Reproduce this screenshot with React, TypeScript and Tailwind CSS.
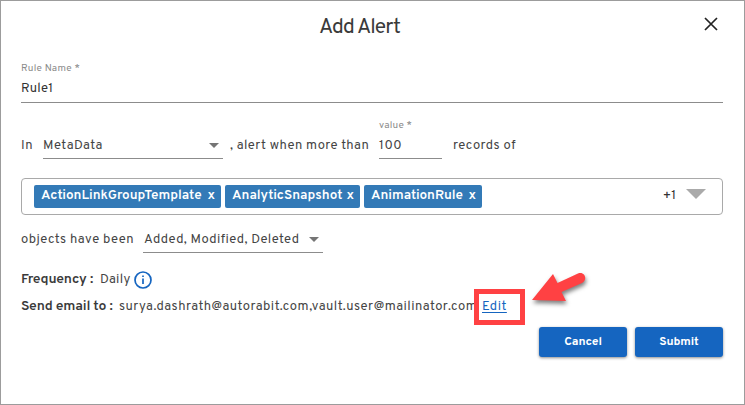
import React from "react";

type Chip = { label: string; width: string };

const chips: Chip[] = [
  { label: "ActionLinkGroupTemplate", width: "w-[187px]" },
  { label: "AnalyticSnapshot", width: "w-[135px]" },
  { label: "AnimationRule", width: "w-[118px]" },
];

function Caret({ className }: { className: string }) {
  return (
    <svg viewBox="0 0 10 5" preserveAspectRatio="none" className={className}>
      <path d="M0 0H10L5 5Z" fill="currentColor" />
    </svg>
  );
}

export default function App() {
  return (
    <div className="relative flex h-[405px] w-[745px] flex-col overflow-hidden whitespace-nowrap border border-[#9c9c9c] bg-white pl-5 pr-[21px] font-[Overpass,Roboto,sans-serif] text-[13px] leading-4 text-[#444]">
      <header className="flex h-[60px] shrink-0 pt-[15px]">
        <h1 className="ml-[298px] w-[371px] text-[21px] leading-6 tracking-[-0.95px] text-[#3a3a3a]">Add Alert</h1>
        <button aria-label="Close" className="ml-[14px] mt-px size-[14px]">
          <svg viewBox="0 0 14 14" className="size-[14px]">
            <path d="M1 1L13 13M13 1L1 13" stroke="#222" strokeWidth="1.7" />
          </svg>
        </button>
      </header>

      <label className="flex h-[42px] shrink-0 flex-col border-b border-[#8c8c8c]">
        <span className="h-4 pt-px text-[10px] leading-[13px] tracking-[0.25px] text-[#8b8b8b]">Rule Name *</span>
        <span className="pt-1 tracking-[0.25px] text-[#333]">Rule1</span>
      </label>

      <div className="flex h-[75px] shrink-0 items-start pt-[35px]">
        <span className="w-[22px] tracking-[0.5px]">In</span>
        <div className="flex h-[21px] w-[180px] justify-between border-b border-[#8c8c8c]">
          <span className="tracking-[0.5px]">MetaData</span>
          <Caret className="mr-1 mt-[5px] h-[5px] w-[10px] text-[#757575]" />
        </div>
        <span className="ml-[7px] w-[149px] tracking-[0.4px]">, alert when more than</span>
        <label className="-mt-[19px] flex h-10 w-[63px] flex-col border-b border-[#8c8c8c]">
          <span className="h-[19px] text-[10px] leading-[14px] tracking-[0.25px] text-[#8b8b8b]">value *</span>
          <span className="tracking-[0.6px]">100</span>
        </label>
        <span className="ml-[11px] tracking-[0.45px]">records of</span>
      </div>

      <div className="flex h-[37px] w-[702px] shrink-0 items-center gap-1 rounded-[4px] border border-[#a9a9a9] pl-3">
        {chips.map((chip) => (
          <span
            key={chip.label}
            className={`flex h-[23px] items-center justify-between rounded-[2px] bg-[#337ab7] pb-px pl-[7px] pr-[6px] text-[13.5px] font-semibold text-white ${chip.width}`}
          >
            <span>{chip.label}</span>
            <span>x</span>
          </span>
        ))}
        <span className="ml-auto pb-[2px] text-[#333]">+1</span>
        <Caret className="mb-[6px] ml-[6px] mr-4 h-[10px] w-5 text-[#aaa]" />
      </div>

      <div className="flex h-[57px] shrink-0 items-start pt-[17px]">
        <span className="w-[122px] tracking-[0.45px]">objects have been</span>
        <div className="flex h-[21px] w-[180px] justify-between border-b border-[#8c8c8c]">
          <span className="pl-px tracking-[0.4px]">Added, Modified, Deleted</span>
          <Caret className="mr-1 mt-[5px] h-[5px] w-[10px] text-[#757575]" />
        </div>
      </div>

      <div className="flex h-[27px] shrink-0 items-start">
        <span className="w-[79px] text-[14px] font-semibold tracking-[-0.2px] text-[#3a3a3a]">Frequency :</span>
        <span className="w-[34px] tracking-[0.3px]">Daily</span>
        <svg viewBox="0 0 18 18" className="-mt-px size-[18px]" fill="none" stroke="#1565c0">
          <circle cx="9" cy="9" r="8" strokeWidth="1.7" />
          <path d="M9 7.5V13M9 4.5V6" strokeWidth="1.7" />
        </svg>
      </div>

      <div className="flex h-[28px] shrink-0 items-start">
        <span className="w-[98px] text-[14px] font-semibold tracking-[-0.2px] text-[#3a3a3a]">Send email to :</span>
        <span className="w-[356px] tracking-[0.48px]">surya.dashrath@autorabit.com,vault.user@mailinator.com</span>
        <a className="ml-[7px] tracking-[0.5px] text-[#1565c0] underline underline-offset-2">Edit</a>
      </div>

      <footer className="flex justify-end gap-2">
        <button className="h-[30px] w-[88px] rounded-[3px] bg-[#1565c0] text-[12px] font-bold tracking-[-0.1px] text-white shadow-[0_1px_3px_rgba(0,0,0,0.45)]">Cancel</button>
        <button className="h-[30px] w-[88px] rounded-[3px] bg-[#1565c0] text-[12px] font-bold tracking-[-0.1px] text-white shadow-[0_1px_3px_rgba(0,0,0,0.45)]">Submit</button>
      </footer>

      <div className="absolute left-[473px] top-[288px] h-[36px] w-[51px] border-[5px] border-[#ff4143]" />
      <svg viewBox="0 0 64 44" className="absolute left-[525px] top-[265px] h-[44px] w-[64px] drop-shadow-[1px_3px_2px_rgba(0,0,0,0.5)]">
        <path d="M6 34L27 8L31.5 17L52 7.5C59 5 62 14 56 17L35.5 26L40 35Z" fill="#ff4143" />
      </svg>
    </div>
  );
}
